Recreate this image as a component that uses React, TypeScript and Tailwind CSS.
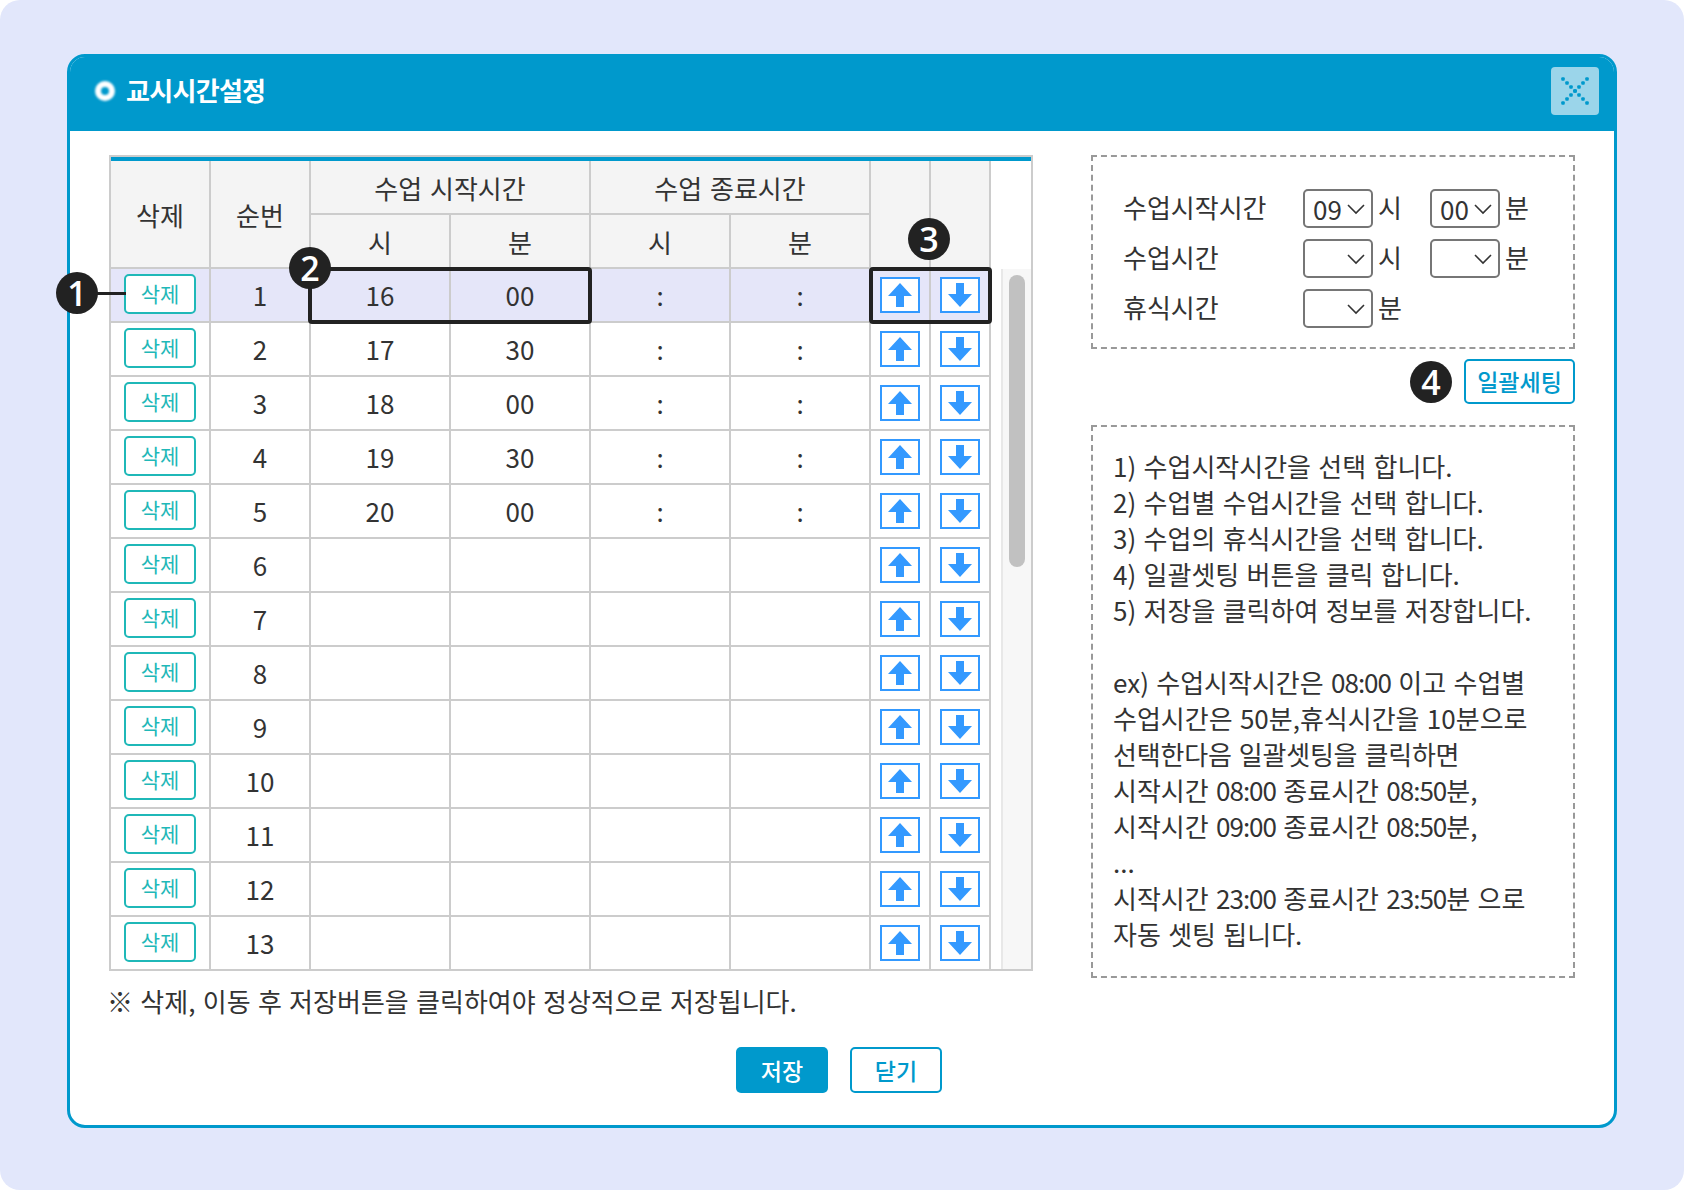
const FONT = "font-['Noto_Sans_CJK_KR','Noto_Sans',sans-serif]";

const times: Record<number, [string, string]> = {
  1: ['16', '00'],
  2: ['17', '30'],
  3: ['18', '00'],
  4: ['19', '30'],
  5: ['20', '00'],
};

const rows = Array.from({ length: 13 }, (_, i) => i + 1);
const dots = [-3, -2, -1, 0, 1, 2, 3];

const headCell = 'border-r-2 border-[#cccccc] flex items-center justify-center';
const bodyCell = 'border-r-2 border-[#cccccc] flex items-center justify-center';
const textCell = `${bodyCell} pb-[2px]`;

function Badge({ n, className = '' }: { n: number; className?: string }) {
  return (
    <div
      className={`w-[42px] h-[42px] rounded-full bg-[#222222] text-white flex items-center justify-center text-[34px] leading-none font-['Open_Sans',sans-serif] font-semibold ${className}`}
    >
      {n}
    </div>
  );
}

function ArrowButton({ dir }: { dir: 'up' | 'down' }) {
  return (
    <button className="w-10 h-9 border-2 border-[#3399ff] bg-white flex items-center justify-center">
      <svg width="26" height="26" viewBox="0 0 26 26" className={dir === 'down' ? 'rotate-180' : ''}>
        <path d="M13 1 L25 14 H17 V25 H9 V14 H1 Z" fill="#3399ff" />
      </svg>
    </button>
  );
}

function Select({ value }: { value?: string }) {
  return (
    <div className="w-[70px] h-[39px] border-2 border-[#767676] rounded-[5px] bg-white flex items-center justify-between pl-[8px] pr-[6px] text-[26px] leading-none">
      <span>{value}</span>
      <svg width="18" height="18" viewBox="0 0 18 18" fill="none" stroke="#333333" strokeWidth="1.6" className="ml-auto">
        <path d="M1 5 L9 13 L17 5" />
      </svg>
    </div>
  );
}

function Time({ children }: { children: string }) {
  return <span className="tracking-[-1px]">{children}</span>;
}

function Row({ n }: { n: number }) {
  const t = times[n];
  return (
    <div
      className={`grid grid-cols-[100px_100px_140px_140px_140px_140px_60px_60px] h-[54px] border-b-2 border-[#cccccc] ${
        n === 1 ? 'bg-[#e5e6f9]' : 'bg-white'
      }`}
    >
      <div className={bodyCell}>
        <button className="w-[72px] h-10 -mt-[2px] pb-[2px] border-2 border-[#1fb8b8] rounded-[5px] bg-white text-[#1fb8b8] text-[21px] leading-none">
          삭제
        </button>
      </div>
      <div className={textCell}>{n}</div>
      <div className={textCell}>{t?.[0]}</div>
      <div className={textCell}>{t?.[1]}</div>
      <div className={textCell}>{t ? ':' : ''}</div>
      <div className={textCell}>{t ? ':' : ''}</div>
      <div className={bodyCell}>
        <ArrowButton dir="up" />
      </div>
      <div className={bodyCell}>
        <ArrowButton dir="down" />
      </div>
    </div>
  );
}

function TimeTable() {
  return (
    <div className="relative w-[924px] h-[816px] border-2 border-[#cccccc] bg-white">
      <div className="h-[4px] bg-[#0099cc]" />
      <div className="grid grid-cols-[100px_100px_140px_140px_140px_140px_60px_60px] grid-rows-[54px_52px] w-[880px] bg-[#f4f4f4] border-b-2 border-[#cccccc] h-[108px]">
        <div className={`${headCell} row-span-2`}>삭제</div>
        <div className={`${headCell} row-span-2`}>순번</div>
        <div className={`${headCell} col-span-2 border-b-2 [word-spacing:2px]`}>수업 시작시간</div>
        <div className={`${headCell} col-span-2 border-b-2 [word-spacing:2px]`}>수업 종료시간</div>
        <div className={`${headCell} row-span-2`} />
        <div className={`${headCell} row-span-2`} />
        <div className={headCell}>시</div>
        <div className={headCell}>분</div>
        <div className={headCell}>시</div>
        <div className={headCell}>분</div>
      </div>
      <div className="flex h-[700px] overflow-hidden">
        <div className="w-[880px] shrink-0">
          {rows.map((n) => (
            <Row key={n} n={n} />
          ))}
        </div>
        <div className="w-[10px] shrink-0" />
        <div className="flex-1 bg-[#f7f7f7] border-l-2 border-[#e8e8e8] pl-[6px] pt-[6px]">
          <div className="w-4 h-[292px] rounded-full bg-[#c1c1c1]" />
        </div>
      </div>
    </div>
  );
}

export default function App() {
  return (
    <div className={`relative w-[1684px] h-[1190px] rounded-[20px] bg-[#e2e7fb] pt-[54px] pl-[67px] ${FONT} text-[26px] text-[#333333]`}>
      <div className="w-[1550px] h-[1074px] rounded-[18px] border-[3px] border-[#0099cc] bg-white overflow-hidden">
        {/* Header */}
        <div className="h-[74px] bg-[#0099cc] flex items-center pl-[25px] pr-[15px] pb-[6px]">
          <span className="w-[20px] h-[20px] rounded-full bg-[#0099cc] border-[6px] border-white blur-[1px]" />
          <h1 className="ml-[11px] -mt-[3px] text-white font-bold text-[26px] -tracking-[0.7px]">교시시간설정</h1>
          <button className="ml-auto w-12 h-12 rounded-[4px] bg-[#9bd5ea] flex items-center justify-center">
            <svg width="28" height="28" viewBox="-14 -14 28 28" fill="#0099cc">
              {dots.map((k) => (
                <g key={k}>
                  <rect x={k * 4 - 1.75} y={k * 4 - 1.75} width="3.5" height="3.5" rx="1" />
                  <rect x={k * 4 - 1.75} y={-k * 4 - 1.75} width="3.5" height="3.5" rx="1" />
                </g>
              ))}
            </svg>
          </button>
        </div>

        {/* Body */}
        <div className="flex pl-[39px] pt-[24px]">
          <div>
            <TimeTable />
            <p className="mt-[12px] -ml-[2px] text-[26px] leading-[36px] [word-spacing:1.5px]">
              ※ 삭제, 이동 후 저장버튼을 클릭하여야 정상적으로 저장됩니다.
            </p>
          </div>

          <div className="ml-[58px] w-[484px]">
            <div className="h-[194px] border-2 border-dashed border-[#999999] pl-[30px] pt-[32px] flex flex-col gap-[11px]">
              <div className="flex items-center h-[39px]">
                <span className="w-[180px] -mt-1">수업시작시간</span>
                <Select value="09" />
                <span className="ml-[5px] w-[52px] -mt-1">시</span>
                <Select value="00" />
                <span className="ml-[5px] -mt-1">분</span>
              </div>
              <div className="flex items-center h-[39px]">
                <span className="w-[180px] -mt-1">수업시간</span>
                <Select />
                <span className="ml-[5px] w-[52px] -mt-1">시</span>
                <Select />
                <span className="ml-[5px] -mt-1">분</span>
              </div>
              <div className="flex items-center h-[39px]">
                <span className="w-[180px] -mt-1">휴식시간</span>
                <Select />
                <span className="ml-[5px] -mt-1">분</span>
              </div>
            </div>

            <div className="flex items-center justify-end mt-[10px] gap-3">
              <Badge n={4} />
              <button className="w-[111px] h-[45px] border-2 border-[#0099cc] rounded-[5px] bg-white text-[#0099cc] text-[23px] font-medium">
                일괄세팅
              </button>
            </div>

            <div className="mt-[21px] h-[553px] border-2 border-dashed border-[#999999] pl-[20px] pt-[21px] text-[26px] leading-[36px] [word-spacing:1.5px]">
              <p>1) 수업시작시간을 선택 합니다.</p>
              <p>2) 수업별 수업시간을 선택 합니다.</p>
              <p>3) 수업의 휴식시간을 선택 합니다.</p>
              <p>4) 일괄셋팅 버튼을 클릭 합니다.</p>
              <p>5) 저장을 클릭하여 정보를 저장합니다.</p>
              <p className="mt-[36px]">ex) 수업시작시간은 <Time>08:00</Time> 이고 수업별</p>
              <p>수업시간은 50분,휴식시간을 10분으로</p>
              <p className="tracking-[-0.2px]">선택한다음 일괄셋팅을 클릭하면</p>
              <p>시작시간 <Time>08:00</Time> 종료시간 <Time>08:50</Time>분,</p>
              <p>시작시간 <Time>09:00</Time> 종료시간 <Time>08:50</Time>분,</p>
              <p>...</p>
              <p>시작시간 <Time>23:00</Time> 종료시간 <Time>23:50</Time>분 으로</p>
              <p>자동 셋팅 됩니다.</p>
            </div>
          </div>
        </div>

        {/* Footer buttons */}
        <div className="mt-[28px] flex justify-center gap-[22px] pr-[6px]">
          <button className="w-[92px] h-[46px] rounded-[5px] bg-[#0099cc] text-white text-[23px] font-medium">저장</button>
          <button className="w-[92px] h-[46px] rounded-[5px] border-2 border-[#0099cc] bg-white text-[#0099cc] text-[23px] font-medium">닫기</button>
        </div>
      </div>

      {/* Callouts */}
      <div className="absolute left-[96px] top-[292px] w-[30px] h-[3px] bg-[#222222]" />
      <Badge n={1} className="absolute left-[56px] top-[272px]" />
      <div className="absolute left-[308px] top-[267px] w-[284px] h-[57px] border-4 border-[#222222] rounded-[4px]" />
      <Badge n={2} className="absolute left-[289px] top-[247px]" />
      <div className="absolute left-[869px] top-[267px] w-[123px] h-[57px] border-4 border-[#222222] rounded-[4px]" />
      <Badge n={3} className="absolute left-[908px] top-[218px]" />
    </div>
  );
}
